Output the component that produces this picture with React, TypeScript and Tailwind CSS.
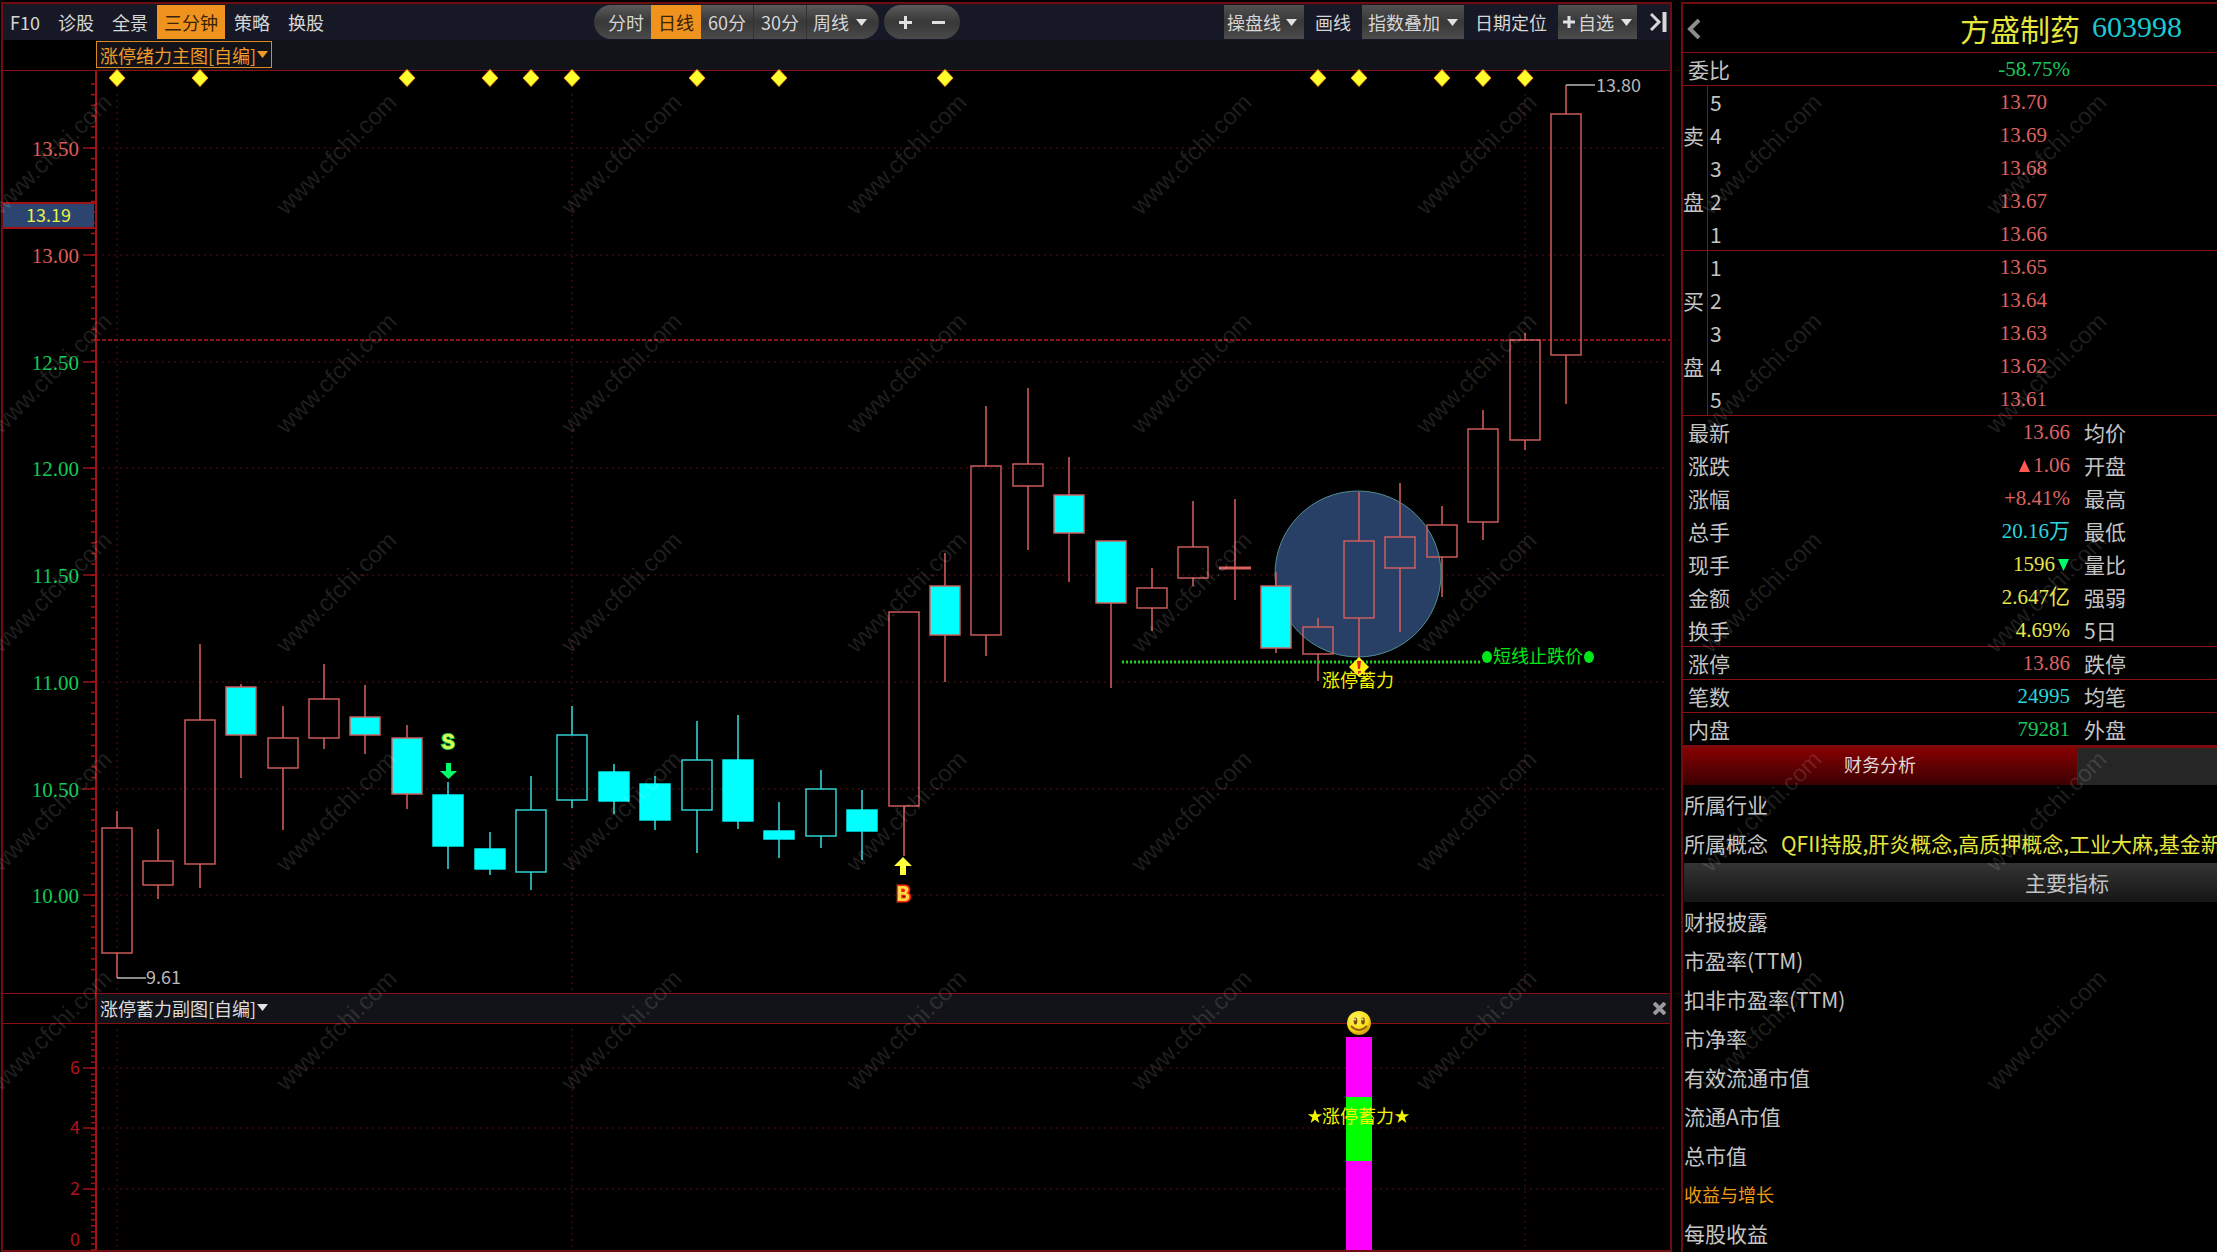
import React from "react";

const SANS = "font-['Noto_Sans_CJK_SC',sans-serif]";
const SERIF = "font-['Liberation_Serif','Noto_Sans_CJK_SC',serif]";

const RED = "#d8605f";
const CYAN = "#35dede";
const GRID = "#2c0709";
const AXIS = "#a01216";

type Kind = "up" | "down" | "cyanUp" | "cyanDown" | "flat";
type Candle = [kind: Kind, high: number, top: number, bottom: number, low: number];

const FIRST_X = 117;
const LAST_X = 1566;

const candles: Candle[] = [
  ["up", 811, 828, 953, 978],
  ["up", 829, 861, 885, 899],
  ["up", 644, 720, 864, 888],
  ["down", 684, 687, 735, 778],
  ["up", 706, 738, 768, 830],
  ["up", 664, 699, 738, 749],
  ["down", 685, 717, 735, 754],
  ["down", 725, 738, 794, 809],
  ["cyanDown", 782, 795, 846, 869],
  ["cyanDown", 832, 849, 869, 875],
  ["cyanUp", 776, 810, 872, 890],
  ["cyanUp", 706, 735, 800, 808],
  ["cyanDown", 764, 772, 801, 814],
  ["cyanDown", 776, 784, 820, 830],
  ["cyanUp", 721, 760, 810, 853],
  ["cyanDown", 715, 760, 821, 829],
  ["cyanDown", 802, 831, 839, 858],
  ["cyanUp", 770, 789, 836, 848],
  ["cyanDown", 790, 810, 831, 860],
  ["up", 612, 612, 806, 856],
  ["down", 553, 586, 635, 682],
  ["up", 406, 466, 635, 656],
  ["up", 388, 464, 486, 550],
  ["down", 457, 495, 533, 582],
  ["down", 541, 541, 603, 688],
  ["up", 568, 588, 608, 631],
  ["up", 501, 547, 578, 586],
  ["flat", 499, 568, 568, 600],
  ["down", 572, 586, 648, 653],
  ["up", 618, 627, 654, 681],
  ["up", 492, 541, 618, 660],
  ["up", 483, 537, 568, 632],
  ["up", 506, 525, 557, 597],
  ["up", 410, 429, 522, 540],
  ["up", 333, 340, 440, 450],
  ["up", 85, 114, 355, 404],
];

const candleX = (i: number) => Math.round(FIRST_X + (i * (LAST_X - FIRST_X)) / (candles.length - 1));

const prices: [string, number][] = [
  ["13.50", 148],
  ["13.00", 255],
  ["12.50", 362],
  ["12.00", 468],
  ["11.50", 575],
  ["11.00", 682],
  ["10.50", 789],
  ["10.00", 895],
];
const subLevels: [string, number][] = [
  ["6", 1068],
  ["4", 1128],
  ["2", 1189],
];
const marked = [0, 2, 7, 9, 10, 11, 14, 16, 20, 29, 30, 32, 33, 34];
const monthLines = [0, 11, 34];

function Caret({ className = "fill-[#e2e2e2]" }: { className?: string }) {
  return (
    <svg width="11" height="7" viewBox="0 0 11 7" className={className} aria-hidden="true">
      <path d="M0 0H11L5.500 7Z" />
    </svg>
  );
}

function Toolbar() {
  const plain = "flex h-[34px] items-center px-[9px]";
  const period = "flex h-[34px] items-center px-[7px]";
  const dark = "flex h-[34px] items-center bg-linear-to-b from-[#505050] via-[#393939] to-[#4c4c4c]";
  return (
    <div className="flex h-[36px] items-center whitespace-nowrap bg-[#161925] text-[18px] leading-[24px] text-[#d6d6d6]">
      <nav className="flex">
        <button className="flex h-[34px] items-center pl-[7px] pr-[9px]">F10</button>
        <button className={plain}>诊股</button>
        <button className={plain}>全景</button>
        <button className="flex h-[34px] items-center bg-[#f0921e] px-[7px] text-[#3a2206]">三分钟</button>
        <button className={plain}>策略</button>
        <button className={plain}>换股</button>
      </nav>
      <div className="ml-[261px] flex overflow-hidden rounded-full bg-linear-to-b from-[#5a5a5a] via-[#383838] to-[#4a4a4a]">
        <button className="flex h-[34px] items-center pl-[14px] pr-[7px]">分时</button>
        <button className="flex h-[34px] items-center bg-[#f0921e] px-[7px] text-[#3a2206]">日线</button>
        <button className={period + " border-r border-[#333]"}>60分</button>
        <button className={period + " border-r border-[#333]"}>30分</button>
        <button className="flex h-[34px] items-center gap-[7px] pl-[6px] pr-[12px]">
          周线
          <Caret />
        </button>
      </div>
      <div className="ml-[5px] flex overflow-hidden rounded-full bg-linear-to-b from-[#5a5a5a] via-[#383838] to-[#4a4a4a] px-[5px]">
        <button aria-label="放大" className="flex h-[34px] w-[33px] items-center justify-center">
          <svg width="13" height="13" viewBox="0 0 13 13" aria-hidden="true">
            <path d="M6.500 0V13M0 6.500H13" stroke="#e0e0e0" strokeWidth="3" />
          </svg>
        </button>
        <button aria-label="缩小" className="flex h-[34px] w-[33px] items-center justify-center">
          <svg width="13" height="13" viewBox="0 0 13 13" aria-hidden="true">
            <path d="M0 6.500H13" stroke="#e0e0e0" strokeWidth="3" />
          </svg>
        </button>
      </div>
      <div className="ml-auto flex items-center">
        <button className={dark + " gap-[5px] pl-[3px] pr-[7px]"}>
          操盘线
          <Caret />
        </button>
        <button className="flex h-[34px] items-center px-[11px]">画线</button>
        <button className={dark + " gap-[7px] px-[6px]"}>
          指数叠加
          <Caret />
        </button>
        <button className="flex h-[34px] items-center px-[11px]">日期定位</button>
        <button className={dark + " px-[5px]"}>
          <svg width="12" height="12" viewBox="0 0 12 12" className="mr-[3px]" aria-hidden="true">
            <path d="M6 0V12M0 6H12" stroke="#e0e0e0" strokeWidth="3" />
          </svg>
          自选
          <Caret className="ml-[7px] fill-[#e2e2e2]" />
        </button>
        <button aria-label="展开" className="ml-[13px] mr-[3px] flex h-[34px] items-center">
          <svg width="17" height="20" viewBox="0 0 17 20" fill="none" stroke="#d8d8d8" aria-hidden="true">
            <path d="M1 2L9 10L1 18" strokeWidth="3" />
            <path d="M14.500 0V20" strokeWidth="4" />
          </svg>
        </button>
      </div>
    </div>
  );
}

function CandleShape({ c, x }: { c: Candle; x: number }) {
  const [kind, high, top, bottom, low] = c;
  const cyan = kind === "cyanUp" || kind === "cyanDown";
  const stroke = cyan ? CYAN : RED;
  const filled = kind === "down" || kind === "cyanDown";
  return (
    <g stroke={kind === "cyanDown" ? "#00ffff" : stroke} fill={filled ? "#00ffff" : "none"}>
      <path d={`M${x} ${high}V${top}M${x} ${bottom}V${low}`} stroke={stroke} strokeWidth="1.500" />
      {kind === "flat" ? (
        <path d={`M${x - 16} ${top}H${x + 16}`} strokeWidth="3" />
      ) : (
        <rect x={x - 15} y={top} width={30} height={bottom - top} strokeWidth="1.400" />
      )}
    </g>
  );
}

function PriceChart() {
  const ticks = Array.from({ length: 85 }, (_, i) => 84 + i * 10.67 - 10.67).filter((y) => y > 74 && y < 990);
  return (
    <svg viewBox="3 71 1667 922" className="block h-auto w-full overflow-visible" role="img" aria-label="日线K线图">
      <g stroke={GRID} strokeWidth="2" strokeDasharray="2 4">
        {prices.map(([p, y]) => (
          <path key={p} d={`M102 ${y}H1668`} />
        ))}
        {monthLines.map((i) => (
          <path key={i} d={`M${candleX(i)} 94V990`} />
        ))}
      </g>
      <path d="M96 340H1670" stroke="#8c1418" strokeWidth="2" strokeDasharray="4 2" />
      <path d="M96 71V993" stroke={AXIS} strokeWidth="2" />
      <g stroke={AXIS} strokeWidth="1.500">
        {ticks.map((y) => (
          <path key={y} d={`M91 ${y}H96`} />
        ))}
        {prices.map(([p, y]) => (
          <path key={p} d={`M83 ${y}H96`} />
        ))}
      </g>
      <g fontSize="21" textAnchor="end" className={SERIF}>
        {prices.map(([p, y]) => (
          <text key={p} x="79" y={y + 8} fill={Number(p) > 12.6 ? "#de5a5a" : "#12c858"}>
            {p}
          </text>
        ))}
      </g>
      <rect x="3" y="203" width="91" height="25" fill="#2c4470" />
      <path d="M3 203H96M3 228H96" stroke={AXIS} strokeWidth="2" />
      <text x="26" y="222" fontSize="18" fill="#e4f04a" className={SANS}>
        13.19
      </text>

      <circle cx="1358" cy="574" r="83" fill="#283f66" stroke="#4f8f92" />
      {candles.map((c, i) => (
        <CandleShape key={i} c={c} x={candleX(i)} />
      ))}

      <g fill="#ffff2e" stroke="#ff9a10" strokeWidth="1">
        {marked.map((i) => (
          <path key={i} d={`M${candleX(i)} 69.500l8 8.500l-8 8.500l-8 -8.500z`} />
        ))}
      </g>

      <path d="M1566 85H1595M117 978H146" stroke="#b8b8b8" strokeWidth="1.500" />
      <g fontSize="18" fill="#b8b8b8" className={SANS}>
        <text x="1596" y="92">13.80</text>
        <text x="146" y="984">9.61</text>
      </g>

      <text x="448" y="749" fontSize="22" textAnchor="middle" fill="#e8ff50" stroke="#10c850" strokeWidth="2" paintOrder="stroke" className="font-['Liberation_Mono',monospace] font-bold">
        S
      </text>
      <path d="M446 763h5v8h6l-8.500 8l-8.500 -8h6z" fill="#00ff66" />
      <path d="M903 857l9 9h-6v9h-6v-9h-6z" fill="#ffff3c" />
      <text x="903" y="901" fontSize="22" textAnchor="middle" fill="#ffd84a" stroke="#f02808" strokeWidth="3" paintOrder="stroke" className="font-['Liberation_Mono',monospace] font-bold">
        B
      </text>

      <path d="M1122 662H1480" stroke="#20d020" strokeWidth="3" strokeDasharray="2 2" />
      <g fill="#00e818">
        <ellipse cx="1487" cy="657" rx="5" ry="6" />
        <ellipse cx="1589" cy="657" rx="5" ry="6" />
        <text x="1493" y="663" fontSize="18" className={SANS}>
          短线止跌价
        </text>
      </g>
      <path d="M1359 657l10 10l-10 10l-10 -10z" fill="#ffee10" />
      <path d="M1357 661h4l-1 8h-2zM1358 671h3v3h-3z" fill="#e02010" />
      <text x="1322" y="687" fontSize="18" fill="#f4f400" className={SANS}>
        涨停蓄力
      </text>
    </svg>
  );
}

function SubChart() {
  const ticks = Array.from({ length: 37 }, (_, i) => 1250 - i * 6.06).filter((y) => y > 1027);
  return (
    <svg viewBox="3 1024 1667 226" className="block h-auto w-full overflow-visible" role="img" aria-label="涨停蓄力副图">
      <defs>
        <radialGradient id="face" cx="0.400" cy="0.300" r="0.750">
          <stop offset="0" stopColor="#fff45a" />
          <stop offset="0.650" stopColor="#fbdc1c" />
          <stop offset="1" stopColor="#c98a08" />
        </radialGradient>
      </defs>
      <g stroke={GRID} strokeWidth="2" strokeDasharray="2 4">
        {subLevels.map(([p, y]) => (
          <path key={p} d={`M102 ${y}H1668`} />
        ))}
        {monthLines.map((i) => (
          <path key={i} d={`M${candleX(i)} 1029V1249`} />
        ))}
      </g>
      <path d="M96 1024V1250" stroke={AXIS} strokeWidth="2" />
      <g stroke={AXIS} strokeWidth="1.500">
        {ticks.map((y) => (
          <path key={y} d={`M91 ${y}H96`} />
        ))}
        {subLevels.map(([p, y]) => (
          <path key={p} d={`M83 ${y}H96`} />
        ))}
      </g>
      <g fontSize="18" textAnchor="end" fill="#b01418" className={SANS}>
        {subLevels.map(([p, y]) => (
          <text key={p} x="80" y={y + 6}>
            {p}
          </text>
        ))}
        <text x="80" y="1246">0</text>
      </g>
      <rect x="1346" y="1037" width="26" height="213" fill="#ff00ff" />
      <rect x="1346" y="1097" width="26" height="64" fill="#00ff00" />
      <circle cx="1359" cy="1023" r="12" fill="url(#face)" />
      <g fill="#7a4a08">
        <ellipse cx="1355.500" cy="1021" rx="1.800" ry="3.500" />
        <ellipse cx="1363" cy="1021" rx="1.800" ry="3.500" />
      </g>
      <g fill="#fff8c0">
        <circle cx="1355" cy="1019.500" r="1" />
        <circle cx="1362.500" cy="1019.500" r="1" />
      </g>
      <path d="M1351 1026Q1359 1034 1367 1026" stroke="#9a6208" strokeWidth="1.800" fill="none" />
      <g fill="#f4f400">
        <path id="star" d="M1315 1109l1.700 5.300h5.500l-4.500 3.300l1.700 5.400l-4.400 -3.300l-4.400 3.300l1.700 -5.400l-4.500 -3.300h5.500z" />
        <use href="#star" x="87" />
        <text x="1322" y="1123" fontSize="18" className={SANS}>
          涨停蓄力
        </text>
      </g>
    </svg>
  );
}

const sells = [
  ["", "5", "13.70"],
  ["卖", "4", "13.69"],
  ["", "3", "13.68"],
  ["盘", "2", "13.67"],
  ["", "1", "13.66"],
];
const buys = [
  ["", "1", "13.65"],
  ["买", "2", "13.64"],
  ["", "3", "13.63"],
  ["盘", "4", "13.62"],
  ["", "5", "13.61"],
];

function Book({ rows }: { rows: string[][] }) {
  return (
    <tbody className="block">
      {rows.map(([side, level, price]) => (
        <tr key={level} className="flex h-[33px] border-[#8a0e12] leading-[33px] last:border-b">
          <td className="w-[25px] shrink-0 border-r border-[#8a0e12]">{side}</td>
          <th scope="row" className="w-[60px] pl-[2px] text-left font-normal">{level}</th>
          <td className={`${SERIF} w-[279px] text-right text-[#de6262]`}>{price}</td>
        </tr>
      ))}
    </tbody>
  );
}

const stats: { label: string; value: React.ReactNode; color: string; next: string; line?: boolean }[] = [
  { label: "最新", value: "13.66", color: "text-[#de6262]", next: "均价" },
  {
    label: "涨跌",
    value: (
      <>
        <svg width="11" height="12" viewBox="0 0 11 12" className="mr-[3px] inline-block align-baseline" aria-hidden="true">
          <path d="M5.500 0L11 12H0Z" fill="#ff5a50" />
        </svg>
        1.06
      </>
    ),
    color: "text-[#de6262]",
    next: "开盘",
  },
  { label: "涨幅", value: "+8.41%", color: "text-[#de6262]", next: "最高" },
  { label: "总手", value: "20.16万", color: "text-[#2cd4dc]", next: "最低" },
  {
    label: "现手",
    value: (
      <>
        1596
        <svg width="11" height="12" viewBox="0 0 11 12" className="ml-[3px] mr-px inline-block align-baseline" aria-hidden="true">
          <path d="M0 0H11L5.500 12Z" fill="#00ff66" />
        </svg>
      </>
    ),
    color: "text-[#e6e64a]",
    next: "量比",
  },
  { label: "金额", value: "2.647亿", color: "text-[#e6e64a]", next: "强弱" },
  { label: "换手", value: "4.69%", color: "text-[#e6e64a]", next: "5日", line: true },
  { label: "涨停", value: "13.86", color: "text-[#de6262]", next: "跌停", line: true },
  { label: "笔数", value: "24995", color: "text-[#2cd4dc]", next: "均笔", line: true },
  { label: "内盘", value: "79281", color: "text-[#18c85c]", next: "外盘" },
];

const metrics = ["财报披露", "市盈率(TTM)", "扣非市盈率(TTM)", "市净率", "有效流通市值", "流通A市值", "总市值"];

function QuotePanel() {
  return (
    <aside className="mt-[2px] min-w-0 overflow-hidden whitespace-nowrap border-l-2 border-t-2 border-[#6f0c10] text-[21px] text-[#c4c4c4]">
      <header className="flex h-[49px] items-center border-b border-[#8a0e12] pl-[3px] pr-[35px]">
        <button aria-label="返回" className="mt-[2px]">
          <svg width="15" height="20" viewBox="0 0 15 20" fill="none" stroke="#8c8c8c" strokeWidth="4" aria-hidden="true">
            <path d="M13 1L4 10L13 19" />
          </svg>
        </button>
        <h1 className="ml-auto text-[30px] leading-[46px] text-[#e6e63c]">方盛制药</h1>
        <span className={`${SERIF} ml-[12px] pb-[2px] text-[30px] leading-[40px] text-[#1cc8d4]`}>603998</span>
      </header>
      <div className="flex h-[33px] border-b border-[#8a0e12] pl-[5px] leading-[33px]">
        <span className="w-[82px]">委比</span>
        <span className={`${SERIF} w-[300px] text-right text-[#18c85c]`}>-58.75%</span>
      </div>
      <table className="block">
        <Book rows={sells} />
        <Book rows={buys} />
      </table>
      <table className="block">
        <tbody className="block">
          {stats.map((s) => (
            <tr
              key={s.label}
              className={`flex h-[33px] pl-[5px] leading-[33px] last:h-[32px] ${s.line ? "border-b border-[#8a0e12]" : ""}`}
            >
              <th scope="row" className="w-[82px] text-left font-normal">{s.label}</th>
              <td className={`${SERIF} w-[300px] text-right ${s.color}`}>{s.value}</td>
              <th scope="row" className="pl-[14px] text-left font-normal">{s.next}</th>
            </tr>
          ))}
        </tbody>
      </table>
      <div className="flex h-[40px] border-t-[3px] border-[#7c0a0c] bg-[#262626]">
        <button className="w-[395px] border-r border-[#7c0a0c] bg-linear-to-b from-[#860002] to-[#3c0001] pb-[6px] text-[18px] leading-[30px] text-[#e0d8d8]">
          财务分析
        </button>
      </div>
      <dl className="pl-[1px]">
        <dt className="h-[39px] leading-[39px]">所属行业</dt>
        <div className="flex h-[39px] gap-[13px] leading-[39px]">
          <dt>所属概念</dt>
          <dd className="text-[#e6e63c]">QFII持股,肝炎概念,高质押概念,工业大麻,基金新增</dd>
        </div>
        <div className="h-[39px] bg-linear-to-b from-[#343434] to-[#161616] pl-[341px] leading-[39px]">主要指标</div>
        {metrics.map((m) => (
          <dt key={m} className="h-[39px] leading-[39px]">
            {m}
          </dt>
        ))}
        <div className="h-[39px] text-[18px] leading-[38px] text-[#ee9a14]">收益与增长</div>
        <dt className="h-[37px] leading-[39px]">每股收益</dt>
      </dl>
    </aside>
  );
}

function Watermark() {
  return (
    <svg className="pointer-events-none absolute inset-0 h-full w-full" aria-hidden="true">
      <g fontSize="24" fill="#ffffff" fillOpacity="0.130" className="font-['Liberation_Sans',sans-serif]">
        {[0, 1, 2, 3, 4].flatMap((r) =>
          [0, 1, 2, 3, 4, 5, 6, 7].map((c) => (
            <text key={`${r}-${c}`} transform={`translate(${1 + c * 285} ${216 + r * 219}) rotate(-45)`}>
              www.cfchi.com
            </text>
          )),
        )}
      </g>
    </svg>
  );
}

export default function App() {
  return (
    <div className={`${SANS} relative grid min-h-screen grid-cols-[minmax(0,1fr)_536px] gap-x-[9px] overflow-hidden bg-black`}>
      <main className="ml-px mt-[2px] min-w-0 border-2 border-[#6f0c10]">
        <Toolbar />
        <div className="flex h-[31px] border-b border-[#8a0e12]">
          <div className="w-[93px] shrink-0" />
          <div className="flex-1 bg-[#121318] pt-[1px]">
            <button className="flex h-[27px] items-center gap-px border border-[#d98a24] px-[3px] text-[18px] leading-[24px] text-[#f09a28]">
              涨停绪力主图[自编]
              <Caret className="fill-[#f09a28]" />
            </button>
          </div>
        </div>
        <PriceChart />
        <div className="flex h-[31px] border-y border-[#8a0e12]">
          <div className="w-[94px] shrink-0 border-r-2 border-[#8a0e12]" />
          <div className="flex flex-1 items-center justify-between bg-[#121318]">
            <button className="flex items-center gap-px pb-[2px] pl-[3px] text-[18px] leading-[24px] text-[#dcdcdc]">
              涨停蓄力副图[自编]
              <Caret />
            </button>
            <button aria-label="关闭" className="mr-[4px]">
              <svg width="13" height="13" viewBox="0 0 13 13" stroke="#9a9a9e" strokeWidth="4" aria-hidden="true">
                <path d="M1 1L12 12M12 1L1 12" />
              </svg>
            </button>
          </div>
        </div>
        <SubChart />
      </main>
      <QuotePanel />
      <Watermark />
    </div>
  );
}
